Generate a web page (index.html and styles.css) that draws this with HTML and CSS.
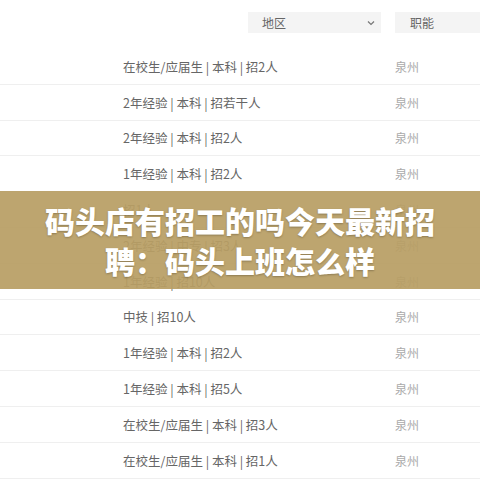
FILE: index.html
```html
<!DOCTYPE html>
<html lang="zh-CN">
<head>
<meta charset="utf-8">
<title>招聘</title>
<link rel="stylesheet" href="styles.css">
</head>
<body>
<div class="page">
  <div class="filters">
    <div class="select select-region"><span>地区</span>
      <svg class="chev" width="8" height="6" viewBox="0 0 8 6"><path d="M1 1.5 L4 4.5 L7 1.5" fill="none" stroke="#777" stroke-width="1.2"/></svg>
    </div>
    <div class="select select-func"><span>职能</span></div>
  </div>
  <ul class="list">
    <li class="row"><span class="info">在校生/应届生 | 本科 | 招2人</span><span class="loc">泉州</span></li>
    <li class="row"><span class="info">2年经验 | 本科 | 招若干人</span><span class="loc">泉州</span></li>
    <li class="row"><span class="info">2年经验 | 本科 | 招2人</span><span class="loc">泉州</span></li>
    <li class="row"><span class="info">1年经验 | 本科 | 招2人</span><span class="loc">泉州</span></li>
    <li class="row"><span class="info">招1人</span><span class="loc">泉州</span></li>
    <li class="row"><span class="info">2年经验 | 中专 | 招3人</span><span class="loc">泉州</span></li>
    <li class="row"><span class="info">1年经验 | 招10人</span><span class="loc">泉州</span></li>
    <li class="row"><span class="info">中技 | 招10人</span><span class="loc">泉州</span></li>
    <li class="row"><span class="info">1年经验 | 本科 | 招2人</span><span class="loc">泉州</span></li>
    <li class="row"><span class="info">1年经验 | 本科 | 招5人</span><span class="loc">泉州</span></li>
    <li class="row"><span class="info">在校生/应届生 | 本科 | 招3人</span><span class="loc">泉州</span></li>
    <li class="row"><span class="info">在校生/应届生 | 本科 | 招1人</span><span class="loc">泉州</span></li>
  </ul>
  <div class="banner">
    <h1 class="banner-title">码头店有招工的吗今天最新招聘：码头上班怎么样</h1>
  </div>
</div>
</body>
</html>
```
FILE: styles.css
```css
* { box-sizing: border-box; }
html, body { margin: 0; padding: 0; background: #fff; }
body {
  font-family: "Noto Sans CJK SC", "Noto Sans", sans-serif;
  width: 480px;
  height: 480px;
  overflow: hidden;
}
.page { position: relative; width: 480px; height: 480px; }
.filters {
  display: flex;
  gap: 14px;
  padding: 12px 0 0 248px;
  height: 49px;
}
.select {
  height: 21px;
  background: #f4f4f4;
  display: flex;
  align-items: center;
  font-size: 12px;
  color: #666;
  flex-shrink: 0;
}
.select-region { width: 133px; padding: 0 6px 0 14px; justify-content: space-between; }
.select-func { width: 100px; padding-left: 15px; }
.chev { display: block; }
.list { list-style: none; margin: 0; padding: 0; }
.row {
  height: 35.8px;
  border-bottom: 1px solid #efefef;
  display: flex;
  align-items: center;
  padding-left: 123px;
}
.info { width: 272px; font-size: 12.5px; color: #666; white-space: nowrap; }
.loc { font-size: 12px; color: #aaa; }
.banner {
  position: absolute;
  left: 0;
  right: 0;
  top: 191px;
  height: 98px;
  background: rgba(184, 158, 100, 0.93);
  display: flex;
  align-items: center;
  justify-content: center;
}
.banner-title {
  margin: 0;
  width: 400px;
  text-align: center;
  color: #fff;
  font-size: 30px;
  line-height: 40px;
  font-weight: 900;
  text-shadow: 0 1px 2px rgba(0,0,0,0.25);
}
```
